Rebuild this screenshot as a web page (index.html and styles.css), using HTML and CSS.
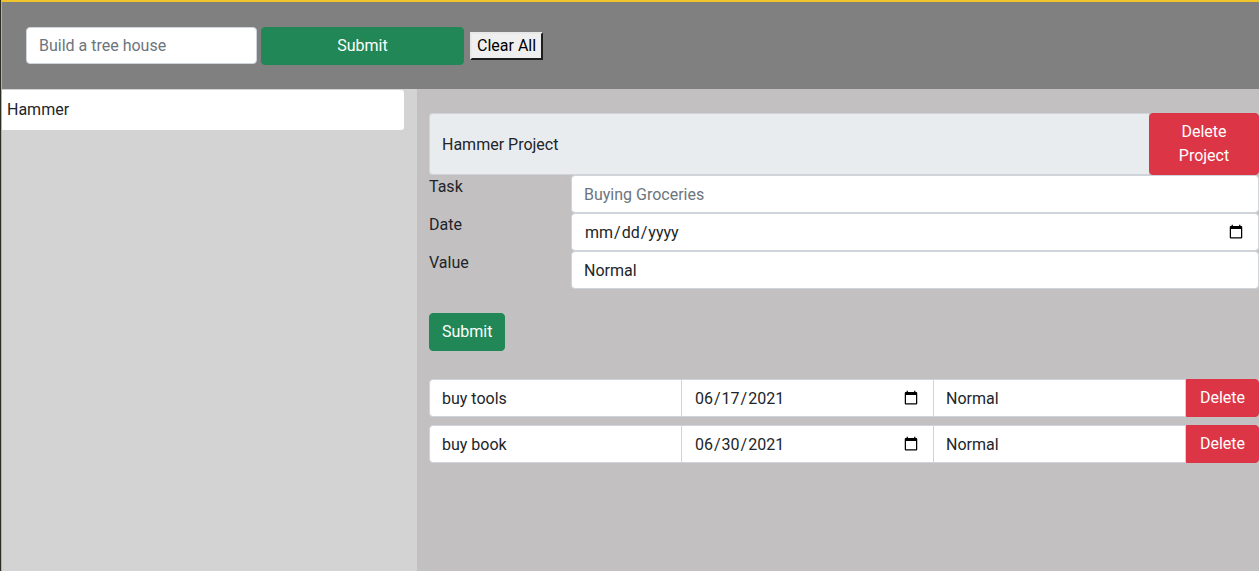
FILE: index.html
```html
<!DOCTYPE html>
<html lang="en">
<head>
<meta charset="utf-8">
<title>Projects</title>
<link rel="stylesheet" href="styles.css">
</head>
<body>
<div class="frame">
  <div class="app">
    <header class="topbar">
      <input class="proj-input" type="text" placeholder="Build a tree house">
      <button class="btn btn-green proj-submit">Submit</button>
      <button class="clear-btn">Clear All</button>
    </header>
    <div class="content">
      <aside class="sidebar">
        <div class="proj-item">Hammer</div>
      </aside>
      <main class="main">
        <div class="proj-head">
          <div class="proj-title">Hammer Project</div>
          <button class="btn btn-red del-proj">Delete<br>Project</button>
        </div>
        <div class="field">
          <label class="field-label">Task</label>
          <input class="control" type="text" placeholder="Buying Groceries">
        </div>
        <div class="field">
          <label class="field-label">Date</label>
          <input class="control" type="date">
        </div>
        <div class="field">
          <label class="field-label">Value</label>
          <input class="control" type="text" value="Normal">
        </div>
        <button class="btn btn-green task-submit">Submit</button>
        <div class="tasks">
          <div class="task-row">
            <input class="cell cell-first" type="text" value="buy tools">
            <input class="cell" type="date" value="2021-06-17">
            <input class="cell" type="text" value="Normal">
            <button class="btn btn-red cell-del">Delete</button>
          </div>
          <div class="task-row">
            <input class="cell cell-first" type="text" value="buy book">
            <input class="cell" type="date" value="2021-06-30">
            <input class="cell" type="text" value="Normal">
            <button class="btn btn-red cell-del">Delete</button>
          </div>
        </div>
      </main>
    </div>
  </div>
</div>
</body>
</html>
```

FILE: styles.css
```css
* { box-sizing: border-box; }

html, body {
  margin: 0;
  height: 100%;
}

body {
  font-family: Roboto, "Liberation Sans", sans-serif;
  font-size: 16px;
  color: #212529;
  background: #d3d3d3;
}

.frame {
  height: 100%;
  border-left: 1px solid #2b2f22;
}

.app {
  height: 100%;
  display: flex;
  flex-direction: column;
  border-left: 1px solid #a6d21c;
  border-top: 2px solid #f0c52c;
}

.topbar {
  flex: 0 0 87px;
  background: #808080;
  display: flex;
  align-items: center;
  padding: 0 0 0 24px;
}

.proj-input {
  width: 231px;
  height: 37px;
  border: 1px solid #ced4da;
  border-radius: 4px;
  padding: 6px 12px;
  font: inherit;
  color: #212529;
  background: #fff;
  margin-top: -1px;
}

.proj-input::placeholder,
.control::placeholder { color: #6c757d; }

.btn {
  font: inherit;
  border: 1px solid transparent;
  border-radius: 4px;
  color: #fff;
  line-height: 24px;
  padding: 6px 12px;
  cursor: pointer;
}

.btn-green { background: #218756; border-color: #218756; }
.btn-red { background: #dc3545; border-color: #dc3545; }

.proj-submit {
  width: 203px;
  height: 38px;
  margin-left: 4px;
  margin-top: 1px;
}

.clear-btn {
  margin-left: 6px;
  font: inherit;
  color: #000;
  background: #efefef;
  border: 2px solid;
  border-color: #e8e8e8 #1e1e1e #1e1e1e #e8e8e8;
  padding: 1px 5px;
  height: 28px;
  line-height: 22px;
}

.content {
  flex: 1;
  display: flex;
  min-height: 0;
}

.sidebar {
  width: 415px;
  flex: 0 0 415px;
  background: #d3d3d3;
  padding: 1px 13px 0 0;
}

.proj-item {
  background: #fff;
  height: 40px;
  line-height: 40px;
  padding-left: 5px;
  border-radius: 0 3px 3px 0;
}

.main {
  flex: 1;
  background: #c2c0c1;
  padding: 24px 0 0 12px;
}

.proj-head {
  display: flex;
  height: 62px;
}

.proj-title {
  flex: 1;
  background: #e9ecef;
  border: 1px solid #ced4da;
  border-right: 0;
  border-radius: 4px 0 0 4px;
  padding: 0 12px;
  display: flex;
  align-items: center;
}

.del-proj {
  width: 110px;
  padding: 6px 8px;
}

.field {
  display: flex;
  align-items: flex-start;
}

.field-label {
  width: 142px;
  flex: 0 0 142px;
  line-height: 24px;
}

.control {
  flex: 1;
  height: 38px;
  border: 1px solid #ced4da;
  border-radius: 4px;
  padding: 6px 12px;
  font: inherit;
  color: #212529;
  background: #fff;
  min-width: 0;
}

.task-submit {
  margin-top: 24px;
  height: 38px;
}

.tasks {
  margin-top: 28px;
  display: flex;
  flex-direction: column;
  gap: 8px;
}

.task-row {
  display: flex;
  height: 38px;
}

.cell {
  flex: 1;
  min-width: 0;
  height: 38px;
  border: 1px solid #ced4da;
  border-left-width: 0;
  padding: 6px 12px;
  font: inherit;
  color: #212529;
  background: #fff;
}

.cell-first {
  border-left-width: 1px;
  border-radius: 4px 0 0 4px;
}

.cell-del {
  flex: 0 0 73px;
  height: 38px;
  border-radius: 0 4px 4px 0;
  padding: 6px 10px;
}
```
